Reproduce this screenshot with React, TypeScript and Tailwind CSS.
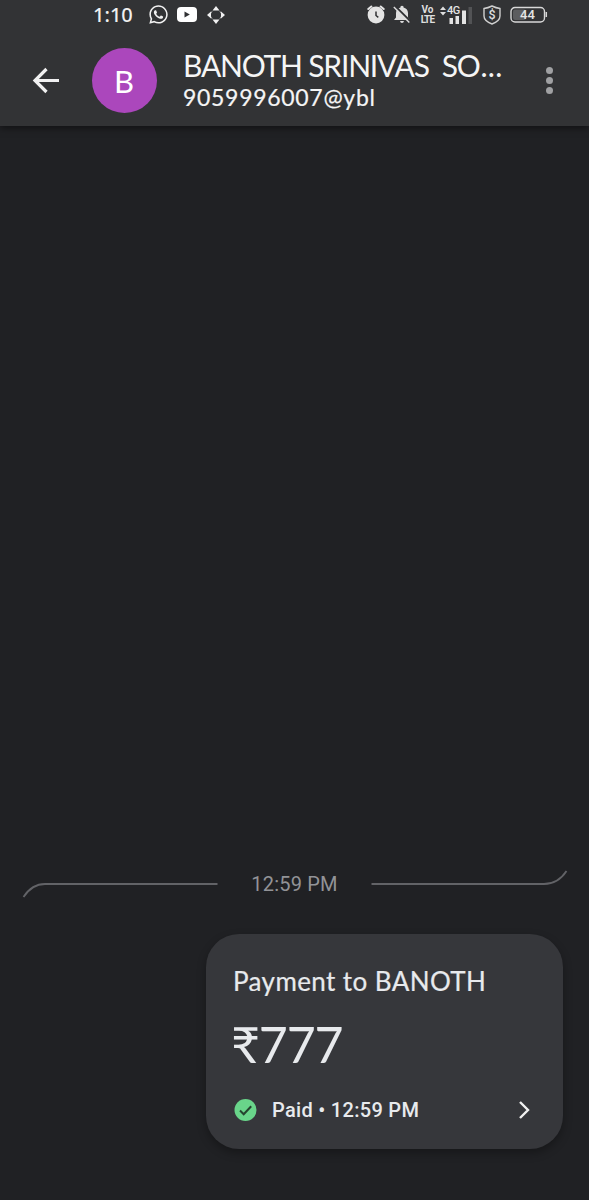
import { FaWhatsapp } from 'react-icons/fa'

const CONTACT = {
  initial: 'B',
  name: 'BANOTH SRINIVAS  SO',
  upiId: '9059996007@ybl',
}

const PAYMENT = {
  title: 'Payment to BANOTH',
  amount: '₹777',
  time: '12:59 PM',
}

function YoutubeIcon() {
  return (
    <svg width="20" height="16" viewBox="0 0 20 16" className="ml-[8px]">
      <rect width="20" height="15" y="0" rx="4" fill="#fff" />
      <path d="M7.5 4.5v6l5.3-3z" fill="#303133" />
    </svg>
  )
}

function MoveIcon() {
  return (
    <svg width="18" height="18" viewBox="0 0 18 18" className="ml-[10px]">
      <path d="M9 0l3.5 4.5h-7zM9 18l3.5-4.5h-7zM0 9l4-3.5v7zM18 9l-4-3.5v7z" fill="#f1f1f1" />
      <path d="M5.2 5.2q-1 .7-.8 2M12.8 5.2q1 .7.8 2M5.2 12.8q-1-.7-.8-2M12.8 12.8q1-.7.8-2" stroke="#aaa" fill="none" />
    </svg>
  )
}

function AlarmIcon() {
  return (
    <svg width="18" height="19" viewBox="0 0 18 19">
      <circle cx="9" cy="10" r="8.4" fill="#e4e4e4" />
      <path d="M1.3 4l3-2.5M16.7 4l-3-2.5" stroke="#e4e4e4" strokeWidth="2" strokeLinecap="round" />
      <path d="M9 6.5v4l2.3 1.8" stroke="#303133" strokeWidth="1.5" fill="none" />
    </svg>
  )
}

function BellOffIcon() {
  return (
    <svg width="18" height="19" viewBox="0 0 18 19" className="ml-2">
      <path d="M1 15l2-2.5V8C3 5 5 3 7.5 2.5v-1q1.5-1.6 3 0v1C13 3 15 5 15 8v4.5l2 2.5zM7 16h4q-.4 2-2 2t-2-2z" fill="#dedede" />
      <path d="M2 1l15.5 15.5" stroke="#303133" strokeWidth="2" />
      <path d="M.8 2l15.5 15.5" stroke="#dedede" strokeWidth="1.4" />
    </svg>
  )
}

function VolteIcon() {
  return (
    <div className="ml-[9px] flex h-[20px] w-[15px] flex-col items-center font-['Roboto'] text-[10px] leading-[10px] font-bold text-[#dedede]">
      <span>Vo</span>
      <span className="tracking-[-0.8px]">LTE</span>
    </div>
  )
}

function SignalIcon() {
  return (
    <div className="relative ml-[5px] h-[20px] w-[34px]">
      <svg width="34" height="20" viewBox="0 0 34 20">
        <path d="M0 5l3-3.5L6 5zM0 7l3 3.5L6 7z" fill="#dedede" />
        <path d="M9.5 13H13v6H9.5zM15.5 11H19v8h-3.5zM22 5.5h4V19h-4z" fill="#e4e4e4" />
        <path d="M28.5 2H32v17h-3.5z" fill="#525355" />
      </svg>
      <span className="absolute -top-px left-[7px] font-['Roboto'] text-[11px] leading-[13px] font-medium tracking-[-0.5px] text-[#e4e4e4]">
        4G
      </span>
    </div>
  )
}

function ShieldIcon() {
  return (
    <svg width="20" height="20" viewBox="0 0 20 20" className="ml-2 font-['Roboto'] font-medium">
      <path d="M10 1q4 2 8 2.5V11c0 4-4 6.5-8 8-4-1.5-8-4-8-8V3.5Q6 3 10 1z" stroke="#cfcfcf" strokeWidth="1.4" fill="none" />
      <text x="10" y="14" fontSize="12.5" textAnchor="middle" fill="#dedede">$</text>
    </svg>
  )
}

function BatteryIcon() {
  return (
    <svg width="38" height="18" viewBox="0 0 38 18" className="ml-[8px] font-['Roboto'] font-medium">
      <rect x="1" y="1.5" width="33.5" height="14.5" rx="4" stroke="#d8d8d8" strokeWidth="1.4" fill="none" />
      <rect x="3" y="3.5" width="13" height="10.5" rx="2" fill="#5c5d5f" />
      <path d="M36.3 6v5" stroke="#d8d8d8" strokeWidth="1.5" />
      <text x="17.5" y="13.4" fontSize="13" textAnchor="middle" fill="#e4e4e4">44</text>
    </svg>
  )
}

function StatusBar() {
  return (
    <div className="flex h-[29px] items-center pl-[93px] pr-[41px]">
      <span className="w-[55px] font-['Noto_Sans'] text-[20px] leading-none font-medium text-[#efefef]">1:10</span>
      <FaWhatsapp size={21} color="#f1f1f1" />
      <YoutubeIcon />
      <MoveIcon />
      <div className="ml-auto flex items-center">
        <AlarmIcon />
        <BellOffIcon />
        <VolteIcon />
        <SignalIcon />
        <ShieldIcon />
        <BatteryIcon />
      </div>
    </div>
  )
}

function Header() {
  return (
    <header className="h-[126px] shrink-0 bg-[#323335] shadow-[0_2px_7px_rgba(0,0,0,0.5)]">
      <StatusBar />
      <div className="flex h-[97px] pl-[32px] pr-[36px]">
        <svg width="28" height="28" viewBox="0 0 28 28" className="mt-[38px]">
          <path d="M14.5 2L3 13.5 14.5 25M3 13.5h24" stroke="#f1f1f1" strokeWidth="3.2" fill="none" />
        </svg>
        <div className="ml-[32px] mt-[19px] flex size-[65px] items-center justify-center rounded-full bg-[#ab47bc] pt-px pr-px font-['Lato'] text-[31px] leading-none text-white">
          {CONTACT.initial}
        </div>
        <div className="ml-[26px] mt-[18px] whitespace-pre font-['Lato'] text-[#f5f5f5]">
          <h1 className="text-[30px] leading-[36px] tracking-[-1.2px]">
            {CONTACT.name}
            <span className="ml-[1px] tracking-[0.2px]">...</span>
          </h1>
          <p className="text-[23px] leading-[28px] tracking-[0.7px] [-webkit-text-stroke:0.2px]">{CONTACT.upiId}</p>
        </div>
        <div className="ml-auto mt-[38px] flex flex-col gap-[3px]">
          <i className="size-[7px] rounded-full bg-[#a0a1a3]" />
          <i className="size-[7px] rounded-full bg-[#a0a1a3]" />
          <i className="size-[7px] rounded-full bg-[#a0a1a3]" />
        </div>
      </div>
    </header>
  )
}

function TimeDivider() {
  return (
    <div className="flex h-[30px] items-center pl-[22px] pr-[21px]">
      <svg width="196" height="30" viewBox="0 0 196 30" fill="none" stroke="#626367" strokeWidth="1.8">
        <path d="M1.5 28Q10 15 23 15H195.5" />
      </svg>
      <span className="flex-1 text-center font-['Roboto'] text-[20px] leading-none tracking-[0.2px] text-[#929397]">
        {PAYMENT.time}
      </span>
      <svg width="197" height="30" viewBox="0 0 197 30" fill="none" stroke="#626367" strokeWidth="1.8">
        <path d="M0.5 15H173Q187 15 195.5 2" />
      </svg>
    </div>
  )
}

function PaymentCard() {
  return (
    <div className="ml-[206px] mt-[35px] h-[215px] w-[357px] rounded-[33px] bg-[#36373b] pl-[27px] pr-[33px] pt-[31px] text-[#e8eaed] shadow-[0_4px_10px_rgba(0,0,0,0.3)]">
      <h2 className="whitespace-nowrap font-['Lato'] text-[26px] leading-[32px] tracking-[0.4px] [-webkit-text-stroke:0.2px]">
        {PAYMENT.title}
      </h2>
      <p className="-ml-[2px] mt-[19px] font-['Lato'] text-[50px] leading-[56px] tracking-[-1.1px]">
        {PAYMENT.amount}
      </p>
      <div className="mt-[26px] flex h-[24px] items-center">
        <svg width="24" height="24" viewBox="0 0 24 24">
          <circle cx="12.5" cy="12" r="11" fill="#69d58a" />
          <path d="M7 12.5l3.7 3.7 7.5-8" stroke="#25452f" strokeWidth="2" fill="none" />
        </svg>
        <span className="ml-[15px] whitespace-nowrap font-['Roboto'] text-[20px] leading-none font-medium tracking-[0.3px]">
          Paid • {PAYMENT.time}
        </span>
        <svg width="12" height="20" viewBox="0 0 12 20" className="ml-auto">
          <path d="M2 2l8 8-8 8" stroke="#f1f1f1" strokeWidth="2.4" fill="none" />
        </svg>
      </div>
    </div>
  )
}

export default function App() {
  return (
    <div className="flex h-[1200px] w-[589px] flex-col overflow-hidden bg-[#202124]">
      <Header />
      <main className="flex flex-1 flex-col justify-end pb-[51px]">
        <TimeDivider />
        <PaymentCard />
      </main>
    </div>
  )
}
